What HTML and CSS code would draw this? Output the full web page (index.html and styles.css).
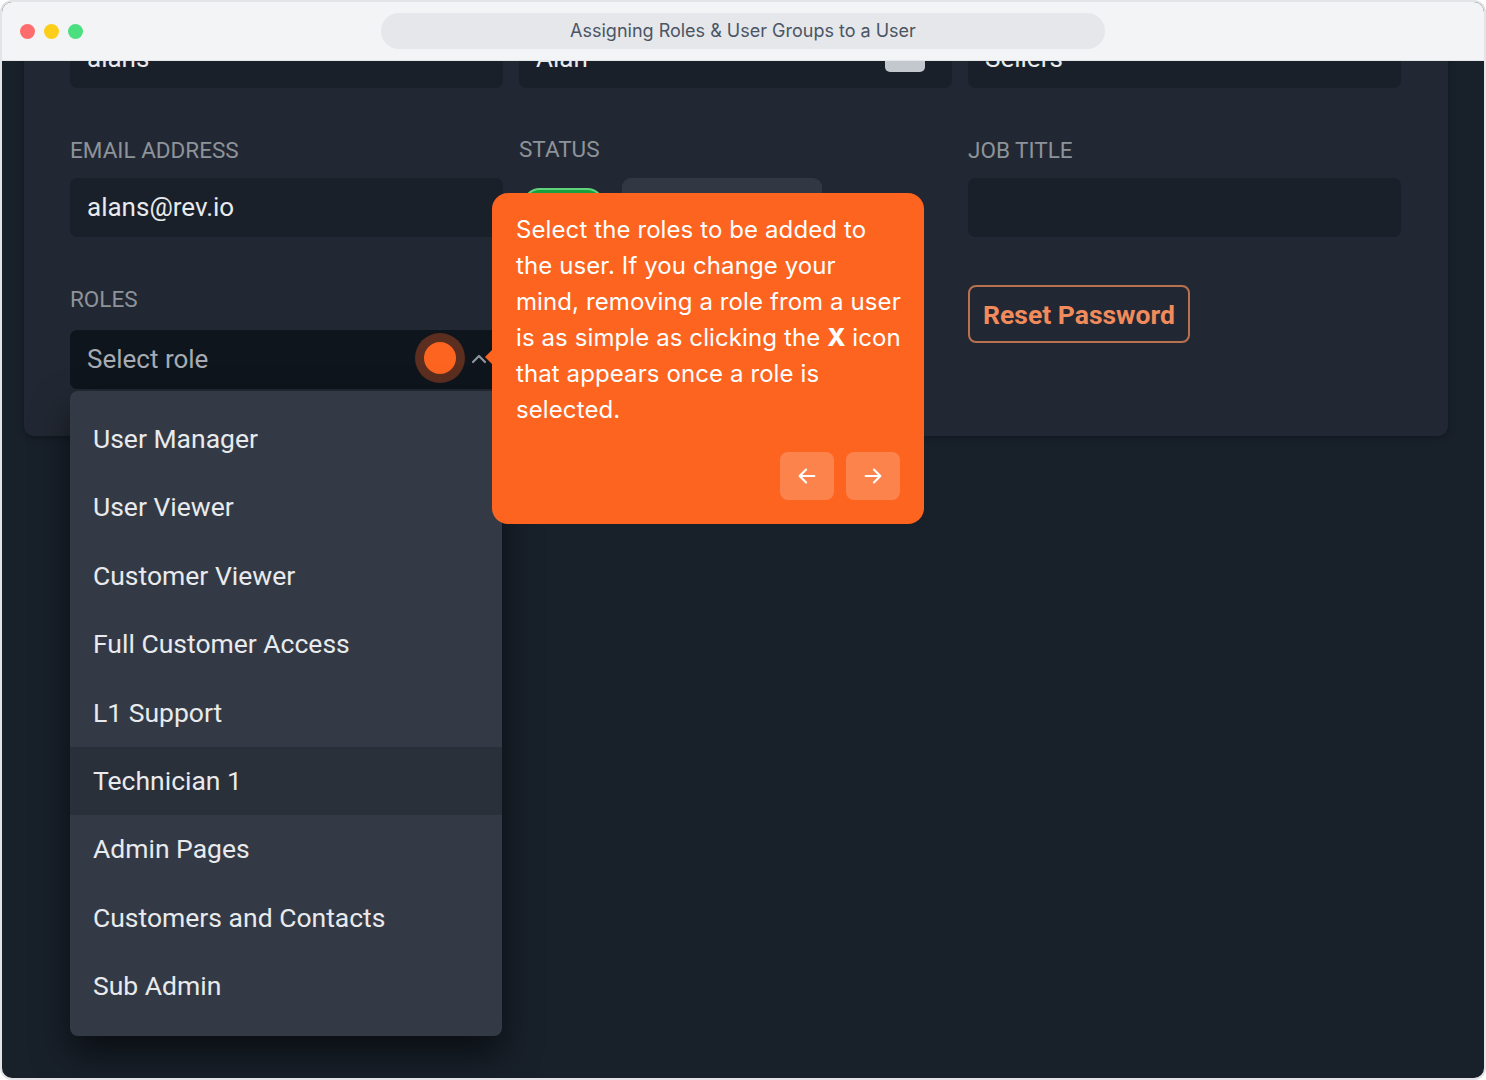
FILE: index.html
```html
<!DOCTYPE html>
<html lang="en">
<head>
  <meta charset="UTF-8" />
  <meta name="viewport" content="width=device-width, initial-scale=1.0"/>
  <title>Assigning Roles &amp; User Groups to a User</title>
  <link rel="stylesheet" href="styles.css">
</head>
<body>
  <div class="window">
    <div class="titlebar">
      <div class="lights">
        <span class="light red"></span>
        <span class="light yellow"></span>
        <span class="light green"></span>
      </div>
      <div class="address">Assigning Roles &amp; User Groups to a User</div>
    </div>

    <div class="viewport">
      <div class="card">
        <div class="form-grid">
          <div class="field">
            <div class="input">alans</div>
          </div>
          <div class="field">
            <div class="input">Alan<span class="pw-icon"></span></div>
          </div>
          <div class="field">
            <div class="input">Sellers</div>
          </div>

          <div class="field">
            <div class="label">EMAIL ADDRESS</div>
            <div class="input">alans@rev.io</div>
          </div>
          <div class="field">
            <div class="label status-label">STATUS</div>
            <div class="status-row">
              <span class="toggle"></span>
              <span class="status-box"></span>
            </div>
          </div>
          <div class="field">
            <div class="label">JOB TITLE</div>
            <div class="input"></div>
          </div>

          <div class="field">
            <div class="label roles-label">ROLES</div>
            <div class="select">
              <span class="placeholder">Select role</span>
              <span class="beacon"><span class="beacon-dot"></span></span>
              <svg class="chevron" width="16" height="10" viewBox="0 0 16 10"><path d="M2 8 L8 2 L14 8" fill="none" stroke="#8f959d" stroke-width="2.2" stroke-linecap="round" stroke-linejoin="round"/></svg>

              <ul class="menu">
                <li>User Manager</li>
                <li>User Viewer</li>
                <li>Customer Viewer</li>
                <li>Full Customer Access</li>
                <li>L1 Support</li>
                <li class="hover">Technician 1</li>
                <li>Admin Pages</li>
                <li>Customers and Contacts</li>
                <li>Sub Admin</li>
              </ul>
            </div>
          </div>
          <div class="field"></div>
          <div class="field">
            <button class="reset-btn">Reset Password</button>
          </div>
        </div>
      </div>

      <div class="tour">
        <span class="tour-arrow"></span>
        <p>Select the roles to be added to the user. If you change your mind, removing a role from a user is as simple as clicking the <b>X</b> icon that appears once a role is selected.</p>
        <div class="tour-nav">
          <button class="tour-btn">
            <svg width="22" height="22" viewBox="0 0 24 24"><path d="M20 12 H4 M11 5 L4 12 L11 19" fill="none" stroke="#fff" stroke-width="2.4" stroke-linecap="round" stroke-linejoin="round"/></svg>
          </button>
          <button class="tour-btn">
            <svg width="22" height="22" viewBox="0 0 24 24"><path d="M4 12 H20 M13 5 L20 12 L13 19" fill="none" stroke="#fff" stroke-width="2.4" stroke-linecap="round" stroke-linejoin="round"/></svg>
          </button>
        </div>
      </div>
    </div>
  </div>
</body>
</html>
```

FILE: styles.css
```css
body {
  margin: 0;
  background: #ffffff;
  font-family: Roboto, "Liberation Sans", sans-serif;
}

.window {
  width: 1486px;
  height: 1080px;
  box-sizing: border-box;
  border: 2px solid #e3e4e7;
  border-radius: 12px;
  overflow: hidden;
  display: flex;
  flex-direction: column;
  background: #18202a;
}

.titlebar {
  height: 58px;
  flex-shrink: 0;
  background: #f3f4f6;
  border-bottom: 1px solid #e6e7ea;
  display: flex;
  align-items: center;
  position: relative;
}

.lights {
  display: flex;
  gap: 9px;
  padding-left: 18px;
}

.light {
  width: 15px;
  height: 15px;
  border-radius: 50%;
}

.light.red { background: #fe6d6d; }
.light.yellow { background: #fcce1a; }
.light.green { background: #4bdf80; }

.address {
  position: absolute;
  left: 379px;
  top: 11px;
  width: 724px;
  height: 36px;
  border-radius: 18px;
  background: #e5e7eb;
  color: #4b5563;
  font-family: Inter, "Noto Sans", sans-serif;
  font-size: 18px;
  line-height: 36px;
  text-align: center;
}

.viewport {
  flex: 1;
  position: relative;
  overflow: hidden;
}

.card {
  margin: -60px 36px 0 22px;
  padding: 28px 47px 47px 46px;
  background: #222833;
  border-radius: 10px;
  box-shadow: 0 2px 6px rgba(0, 0, 0, 0.25);
}

.form-grid {
  display: grid;
  grid-template-columns: repeat(3, 1fr);
  column-gap: 16px;
  row-gap: 50px;
}

.field {
  display: flex;
  flex-direction: column;
}

.label {
  font-size: 22.5px;
  line-height: 24px;
  color: #8e939a;
  margin-bottom: 16px;
}

.status-label {
  margin-top: -1px;
  margin-bottom: 17px;
}

.roles-label {
  margin-bottom: 19px;
}

.input {
  position: relative;
  height: 59px;
  box-sizing: border-box;
  padding: 0 17px;
  border-radius: 7px;
  background: #19202a;
  color: #e8eaed;
  font-size: 26px;
  line-height: 59px;
}

.pw-icon {
  position: absolute;
  right: 27px;
  top: 14px;
  width: 40px;
  height: 29px;
  border-radius: 5px;
  background: #c3c7ce;
}

.status-row {
  display: flex;
  align-items: flex-start;
  gap: 17px;
}

.toggle {
  margin-top: 10px;
  margin-left: 3px;
  width: 83px;
  height: 36px;
  box-sizing: border-box;
  border-radius: 18px;
  background: #17a03d;
  border: 2px solid #5fd27b;
}

.status-box {
  width: 200px;
  height: 44px;
  border-radius: 9px;
  background: #323843;
}

.select {
  position: relative;
  height: 59px;
  box-sizing: border-box;
  padding: 0 17px;
  border-radius: 7px;
  background: #0f151d;
  font-size: 26px;
  line-height: 59px;
}

.placeholder {
  color: #a7abb2;
}

.beacon {
  position: absolute;
  left: 345px;
  top: 3px;
  width: 50px;
  height: 50px;
  border-radius: 50%;
  background: #5b2e1f;
  display: flex;
  align-items: center;
  justify-content: center;
}

.beacon-dot {
  width: 32px;
  height: 32px;
  border-radius: 50%;
  background: #fd6420;
}

.chevron {
  position: absolute;
  left: 401px;
  top: 24px;
}

.menu {
  position: absolute;
  left: 0;
  top: 61px;
  width: 432px;
  margin: 0;
  padding: 14px 0 15px;
  list-style: none;
  background: #343a45;
  border-radius: 8px;
  box-shadow: 0 18px 36px rgba(0, 0, 0, 0.55);
  z-index: 2;
}

.menu li {
  height: 68.4px;
  line-height: 68.4px;
  padding: 0 23px;
  color: #e8eaed;
  font-size: 26.5px;
}

.menu li.hover {
  background: #2a3039;
}

.reset-btn {
  align-self: flex-start;
  margin-top: -2px;
  height: 58px;
  padding: 0 13px;
  border: 2px solid #b9714f;
  border-radius: 8px;
  background: transparent;
  color: #f28b5c;
  font-family: Roboto, "Liberation Sans", sans-serif;
  font-size: 26.5px;
  font-weight: 700;
}

.tour {
  position: absolute;
  left: 490px;
  top: 132px;
  width: 432px;
  box-sizing: border-box;
  padding: 19px 20px 24px 24px;
  background: #fd6420;
  border-radius: 16px;
  color: #ffffff;
  font-family: Inter, "Noto Sans", sans-serif;
  z-index: 3;
}

.tour-arrow {
  position: absolute;
  left: -7px;
  top: 156px;
  width: 0;
  height: 0;
  border-top: 8px solid transparent;
  border-bottom: 8px solid transparent;
  border-right: 8px solid #fd6420;
}

.tour p {
  margin: 0;
  font-size: 24px;
  letter-spacing: 0.1px;
  line-height: 36px;
}

.tour p b {
  font-weight: 800;
}

.tour-nav {
  display: flex;
  justify-content: flex-end;
  gap: 12px;
  margin-top: 24px;
  margin-right: 4px;
}

.tour-btn {
  width: 54px;
  height: 48px;
  border: none;
  border-radius: 8px;
  background: rgba(255, 255, 255, 0.2);
  display: flex;
  align-items: center;
  justify-content: center;
  padding: 0;
}
```
